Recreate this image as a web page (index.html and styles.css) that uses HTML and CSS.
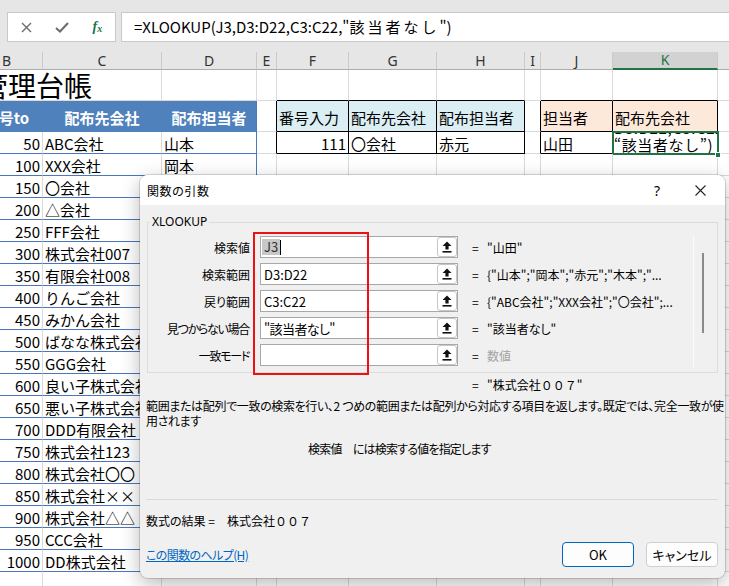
FILE: index.html
```html
<!DOCTYPE html>
<html lang="ja">
<head>
<meta charset="utf-8">
<title>XLOOKUP</title>
<link rel="stylesheet" href="styles.css">
</head>
<body>
<div class="top">
  <div class="fx-box">
    <span class="ic"><svg width="11" height="11" viewBox="0 0 11 11"><path d="M1 1L10 10M10 1L1 10" stroke="#6b6b6b" stroke-width="1.4" fill="none"/></svg></span>
    <span class="ic"><svg width="14" height="11" viewBox="0 0 14 11"><path d="M1 6L5 9.5L13 1" stroke="#6b6b6b" stroke-width="2" fill="none"/></svg></span>
    <span class="ic fx">f<span>x</span></span>
  </div>
  <div class="formula">=XLOOKUP(J3,D3:D22,C3:C22,"<span class="cjk">該当者なし</span>")</div>
</div>

<div class="sheet">
  <div class="c h">B</div><div class="c h">C</div><div class="c h">D</div><div class="c h">E</div><div class="c h">F</div><div class="c h">G</div><div class="c h">H</div><div class="c h">I</div><div class="c h">J</div><div class="c h hk">K</div><div class="c h">L</div>

  <div class="c t">管理台帳</div><div class="c"></div><div class="c"></div><div class="c"></div><div class="c kb"></div><div class="c kb"></div><div class="c kb"></div><div class="c"></div><div class="c kb"></div><div class="c kb"></div><div class="c"></div>

  <div class="c hd">番号to</div><div class="c hd">配布先会社</div><div class="c hd d">配布担当者</div><div class="c kr"></div><div class="c k lb">番号入力</div><div class="c k lb">配布先会社</div><div class="c k lb">配布担当者</div><div class="c kr"></div><div class="c k pk">担当者</div><div class="c k pk">配布先会社</div><div class="c"></div>

  <div class="c n">50</div><div class="c b">ABC会社</div><div class="c b d">山本</div><div class="c kr"></div><div class="c k r">111</div><div class="c k">〇会社</div><div class="c k">赤元</div><div class="c kr"></div><div class="c k">山田</div><div class="c k sel"><div class="wrapx"><div class="frag">D3:D22,C3:C22,</div><div>“該当者なし”)</div></div></div><div class="c"></div>

  <div class="c n">100</div><div class="c b">XXX会社</div><div class="c b d">岡本</div><div class="c"></div><div class="c"></div><div class="c"></div><div class="c"></div><div class="c"></div><div class="c"></div><div class="c"></div><div class="c"></div>
  <div class="c n">150</div><div class="c b">〇会社</div><div class="c b d"></div><div class="c"></div><div class="c"></div><div class="c"></div><div class="c"></div><div class="c"></div><div class="c"></div><div class="c"></div><div class="c"></div>
  <div class="c n">200</div><div class="c b">△会社</div><div class="c b d"></div><div class="c"></div><div class="c"></div><div class="c"></div><div class="c"></div><div class="c"></div><div class="c"></div><div class="c"></div><div class="c"></div>
  <div class="c n">250</div><div class="c b">FFF会社</div><div class="c b d"></div><div class="c"></div><div class="c"></div><div class="c"></div><div class="c"></div><div class="c"></div><div class="c"></div><div class="c"></div><div class="c"></div>
  <div class="c n">300</div><div class="c b">株式会社007</div><div class="c b d"></div><div class="c"></div><div class="c"></div><div class="c"></div><div class="c"></div><div class="c"></div><div class="c"></div><div class="c"></div><div class="c"></div>
  <div class="c n">350</div><div class="c b">有限会社008</div><div class="c b d"></div><div class="c"></div><div class="c"></div><div class="c"></div><div class="c"></div><div class="c"></div><div class="c"></div><div class="c"></div><div class="c"></div>
  <div class="c n">400</div><div class="c b">りんご会社</div><div class="c b d"></div><div class="c"></div><div class="c"></div><div class="c"></div><div class="c"></div><div class="c"></div><div class="c"></div><div class="c"></div><div class="c"></div>
  <div class="c n">450</div><div class="c b">みかん会社</div><div class="c b d"></div><div class="c"></div><div class="c"></div><div class="c"></div><div class="c"></div><div class="c"></div><div class="c"></div><div class="c"></div><div class="c"></div>
  <div class="c n">500</div><div class="c b">ばなな株式会社</div><div class="c b d"></div><div class="c"></div><div class="c"></div><div class="c"></div><div class="c"></div><div class="c"></div><div class="c"></div><div class="c"></div><div class="c"></div>
  <div class="c n">550</div><div class="c b">GGG会社</div><div class="c b d"></div><div class="c"></div><div class="c"></div><div class="c"></div><div class="c"></div><div class="c"></div><div class="c"></div><div class="c"></div><div class="c"></div>
  <div class="c n">600</div><div class="c b">良い子株式会社</div><div class="c b d"></div><div class="c"></div><div class="c"></div><div class="c"></div><div class="c"></div><div class="c"></div><div class="c"></div><div class="c"></div><div class="c"></div>
  <div class="c n">650</div><div class="c b">悪い子株式会社</div><div class="c b d"></div><div class="c"></div><div class="c"></div><div class="c"></div><div class="c"></div><div class="c"></div><div class="c"></div><div class="c"></div><div class="c"></div>
  <div class="c n">700</div><div class="c b">DDD有限会社</div><div class="c b d"></div><div class="c"></div><div class="c"></div><div class="c"></div><div class="c"></div><div class="c"></div><div class="c"></div><div class="c"></div><div class="c"></div>
  <div class="c n">750</div><div class="c b">株式会社123</div><div class="c b d"></div><div class="c"></div><div class="c"></div><div class="c"></div><div class="c"></div><div class="c"></div><div class="c"></div><div class="c"></div><div class="c"></div>
  <div class="c n">800</div><div class="c b">株式会社〇〇</div><div class="c b d"></div><div class="c"></div><div class="c"></div><div class="c"></div><div class="c"></div><div class="c"></div><div class="c"></div><div class="c"></div><div class="c"></div>
  <div class="c n">850</div><div class="c b">株式会社××</div><div class="c b d"></div><div class="c"></div><div class="c"></div><div class="c"></div><div class="c"></div><div class="c"></div><div class="c"></div><div class="c"></div><div class="c"></div>
  <div class="c n">900</div><div class="c b">株式会社△△</div><div class="c b d"></div><div class="c"></div><div class="c"></div><div class="c"></div><div class="c"></div><div class="c"></div><div class="c"></div><div class="c"></div><div class="c"></div>
  <div class="c n">950</div><div class="c b">CCC会社</div><div class="c b d"></div><div class="c"></div><div class="c"></div><div class="c"></div><div class="c"></div><div class="c"></div><div class="c"></div><div class="c"></div><div class="c"></div>
  <div class="c n">1000</div><div class="c b">DD株式会社</div><div class="c b d"></div><div class="c"></div><div class="c"></div><div class="c"></div><div class="c"></div><div class="c"></div><div class="c"></div><div class="c"></div><div class="c"></div>
  <div class="c"></div><div class="c"></div><div class="c"></div><div class="c"></div><div class="c"></div><div class="c"></div><div class="c"></div><div class="c"></div><div class="c"></div><div class="c"></div><div class="c"></div>
</div>
<div class="handle"></div>

<div class="dlg">
  <div class="dlg-title">
    <span class="dlg-name">関数の引数</span>
    <span class="tbtn">?</span>
    <span class="tbtn close"><svg width="11" height="11" viewBox="0 0 11 11"><path d="M0.5 0.5L10.5 10.5M10.5 0.5L0.5 10.5" stroke="#222" stroke-width="1.1" fill="none"/></svg></span>
  </div>
  <div class="dlg-body">
    <fieldset class="grp">
      <legend>XLOOKUP</legend>
      <div class="grp-in">
        <div class="args">
          <div class="lbl">検索値</div>
          <div class="inp"><span class="hl">J3</span><span class="caret"></span><span class="ref"><svg width="10" height="12" viewBox="0 0 10 12"><path d="M5 0.5L9.5 5H6.6V8.6H3.4V5H0.5Z" fill="#111"/><rect x="0.5" y="10" width="9" height="1.6" fill="#111"/></svg></span></div>
          <div class="val"><span class="eq">=</span>"山田"</div>

          <div class="lbl">検索範囲</div>
          <div class="inp"><span class="txt">D3:D22</span><span class="ref"><svg width="10" height="12" viewBox="0 0 10 12"><path d="M5 0.5L9.5 5H6.6V8.6H3.4V5H0.5Z" fill="#111"/><rect x="0.5" y="10" width="9" height="1.6" fill="#111"/></svg></span></div>
          <div class="val"><span class="eq">=</span>{"山本";"岡本";"赤元";"木本";"...</div>

          <div class="lbl">戻り範囲</div>
          <div class="inp"><span class="txt">C3:C22</span><span class="ref"><svg width="10" height="12" viewBox="0 0 10 12"><path d="M5 0.5L9.5 5H6.6V8.6H3.4V5H0.5Z" fill="#111"/><rect x="0.5" y="10" width="9" height="1.6" fill="#111"/></svg></span></div>
          <div class="val"><span class="eq">=</span>{"ABC会社";"XXX会社";"〇会社";...</div>

          <div class="lbl nar">見つからない場合</div>
          <div class="inp"><span class="txt kana">"該当者なし"</span><span class="ref"><svg width="10" height="12" viewBox="0 0 10 12"><path d="M5 0.5L9.5 5H6.6V8.6H3.4V5H0.5Z" fill="#111"/><rect x="0.5" y="10" width="9" height="1.6" fill="#111"/></svg></span></div>
          <div class="val"><span class="eq">=</span>"該当者なし"</div>

          <div class="lbl nar">一致モード</div>
          <div class="inp"><span class="txt"></span><span class="ref"><svg width="10" height="12" viewBox="0 0 10 12"><path d="M5 0.5L9.5 5H6.6V8.6H3.4V5H0.5Z" fill="#111"/><rect x="0.5" y="10" width="9" height="1.6" fill="#111"/></svg></span></div>
          <div class="val"><span class="eq">=</span><span class="muted">数値</span></div>
        </div>
        <div class="track"><div class="thumb"></div></div>
      </div>
    </fieldset>
    <div class="res"><span class="eq">=</span>"株式会社<span class="fw">００７</span>"</div>
    <p class="desc">範囲または配列で一致の検索を行い、2 つめの範囲または配列から対応する項目を返します。既定では、完全一致が使<br>用されます</p>
    <p class="hint">検索値　には検索する値を指定します</p>
    <div class="sep"></div>
    <div class="fres">数式の結果 =　株式会社<span class="fw">００７</span></div>
    <div class="foot">
      <a class="help" href="#">この関数のヘルプ(H)</a>
      <span class="btn ok">OK</span>
      <span class="btn">キャンセル</span>
    </div>
  </div>
  <div class="redbox"></div>
</div>
</body>
</html>
```
FILE: styles.css
```css
* { box-sizing: border-box; }
html, body { margin: 0; padding: 0; }
body {
  width: 729px; height: 586px; overflow: hidden; position: relative;
  background: #fff; color: #000;
  font-family: "Noto Sans CJK JP", "Noto Sans", sans-serif;
}

/* formula bar */
.top { height: 52px; background: #e6e6e6; padding: 12px 0 0 7px; display: flex; gap: 5px; }
.fx-box { width: 109px; height: 30px; background: #fff; border: 1px solid #c9c9c9; display: flex; align-items: center; padding-left: 1px; }
.fx-box .ic { width: 36px; display: flex; justify-content: center; align-items: center; }
.fx { font-family: "Liberation Serif", serif; font-style: italic; color: #217346; font-size: 14px; font-weight: 700; line-height: 1; }
.fx span { font-size: 10px; position: relative; top: 2px; }
.formula { flex: 1; height: 30px; margin-right: -20px; background: #fff; border: 1px solid #c9c9c9; padding-left: 12px; font-size: 15px; line-height: 28px; white-space: nowrap; }
.formula .cjk { letter-spacing: 3px; }

/* sheet */
.sheet {
  display: grid; margin-left: -29px;
  grid-template-columns: 72px 119px 95px 20px 72px 88px 88px 16px 72px 105px 60px;
  grid-template-rows: 18px 31px 31px repeat(21, 22px);
  font-size: 15px;
}
.c {
  border-right: 1px solid #dadada; border-bottom: 1px solid #dadada;
  white-space: nowrap; overflow: hidden; padding: 3px 2px 0;
  display: flex; align-items: center; line-height: 18px;
}
.h {
  background: #e6e6e6; border-right-color: #cacaca; border-bottom-color: #acacac;
  justify-content: center; padding: 0; font-family: "Noto Sans", sans-serif; font-size: 14px; color: #333;
}
.hk { background: #d2d2d2; color: #217346; border-bottom: 2px solid #217346; }
.t { font-size: 28px; overflow: visible; border-right: 0; padding: 0 0 0 9px; line-height: 31px; }
.hd { background: #4f81bd; color: #fff; font-weight: 700; justify-content: center; border-right-color: #4f81bd; border-bottom-color: #4f81bd; }
.n { justify-content: flex-end; border-bottom-color: #4a76c0; }
.b { border-bottom-color: #4a76c0; }
.d { border-right-color: #4a76c0; }
.kb { border-bottom-color: #000; }
.kr { border-right-color: #000; }
.k { border-right-color: #000; border-bottom-color: #000; }
.lb { background: #daeef3; }
.pk { background: #fde9d9; }
.r { justify-content: flex-end; }
.sel { display: block; padding: 0 0 0 1px; outline: 2px solid #217346; outline-offset: -1px; }
.wrapx { margin-top: -13px; line-height: 17px; letter-spacing: 0.6px; }
.handle { position: absolute; left: 715px; top: 152px; width: 6px; height: 6px; background: #217346; border: 1px solid #fff; }

/* dialog */
.dlg {
  position: absolute; left: 140px; top: 175px; width: 585px; height: 403px;
  background: #f0f0f0; border-radius: 8px; overflow: hidden;
  box-shadow: 0 0 0 1px rgba(0,0,0,0.14), 0 6px 20px rgba(0,0,0,0.28);
  font-size: 12px; font-feature-settings: "palt";
}
.dlg-title { height: 30px; background: #fff; display: flex; align-items: center; padding-left: 7px; }
.dlg-name { flex: 1; font-size: 12px; letter-spacing: 0.6px; }
.tbtn { width: 40px; display: flex; justify-content: center; font-size: 14px; font-family: "Noto Sans", sans-serif; }
.tbtn.close { width: 46px; margin-right: 2px; }
.dlg-body { padding: 0 7px 0 6px; }
.grp { margin: 9px 0 0 1px; padding: 0; border: 1px solid #dcdcdc; min-width: 0; }
.grp legend { margin-left: 2px; padding: 0 2px; font-size: 12px; line-height: 16px; font-family: "Noto Sans", sans-serif; }
.grp-in { display: flex; padding: 6px 0 6px; }
.args { flex: 1; display: grid; grid-template-columns: 102px 198px 1fr; column-gap: 10px; row-gap: 5px; grid-auto-rows: 22px; }
.lbl { display: flex; align-items: center; justify-content: flex-end; white-space: nowrap; }
.lbl.nar { letter-spacing: -1.3px; padding-right: 1px; }
.inp { display: flex; align-items: center; background: #fff; border: 1px solid #a8a8a8; padding-left: 1px; font-size: 13px; }
.inp .txt { flex: 1; padding-left: 2px; white-space: nowrap; }
.inp .kana { letter-spacing: -0.6px; }
.hl { background: #c8c8c8; color: #333; padding: 0 2px; line-height: 16px; }
.caret { width: 1px; height: 15px; background: #000; margin-right: auto; }
.ref { width: 20px; height: 20px; border: 1px solid #c6c6c6; border-radius: 3px; background: #fff; display: flex; align-items: center; justify-content: center; }
.val { display: flex; align-items: center; padding-left: 4px; white-space: nowrap; }
.eq { display: inline-block; width: 15px; }
.muted { color: #a3a3a3; }
.track { width: 24px; margin: -1px 0 -1px; border-left: 1px solid #fbfbfb; padding-left: 8px; }
.thumb { width: 2px; height: 80px; margin-top: 18px; background: #8a8a8a; }
.res { margin-top: 4px; padding-left: 326px; line-height: 16px; white-space: nowrap; }
.fw { font-feature-settings: normal; }
.desc { margin: 5px 0 0; line-height: 15px; white-space: nowrap; letter-spacing: -0.35px; }
.hint { margin: 13px 0 0; padding-left: 162px; line-height: 16px; letter-spacing: -0.8px; }
.sep { margin-top: 42px; border-top: 1px solid #d9d9d9; }
.fres { margin-top: 13px; line-height: 16px; }
.foot { margin-top: 13px; display: flex; align-items: center; gap: 12px; height: 25px; }
.help { flex: 1; color: #0067c0; text-decoration: underline; letter-spacing: -0.6px; }
.btn { height: 25px; width: 72px; border: 1px solid #cfcfcf; border-radius: 4px; background: #fdfdfd; display: flex; align-items: center; justify-content: center; font-size: 13px; }
.btn.ok { border-color: #0067c0; }
.redbox { position: absolute; left: 113px; top: 57px; width: 116px; height: 143px; border: 2px solid #ee1111; }
```
